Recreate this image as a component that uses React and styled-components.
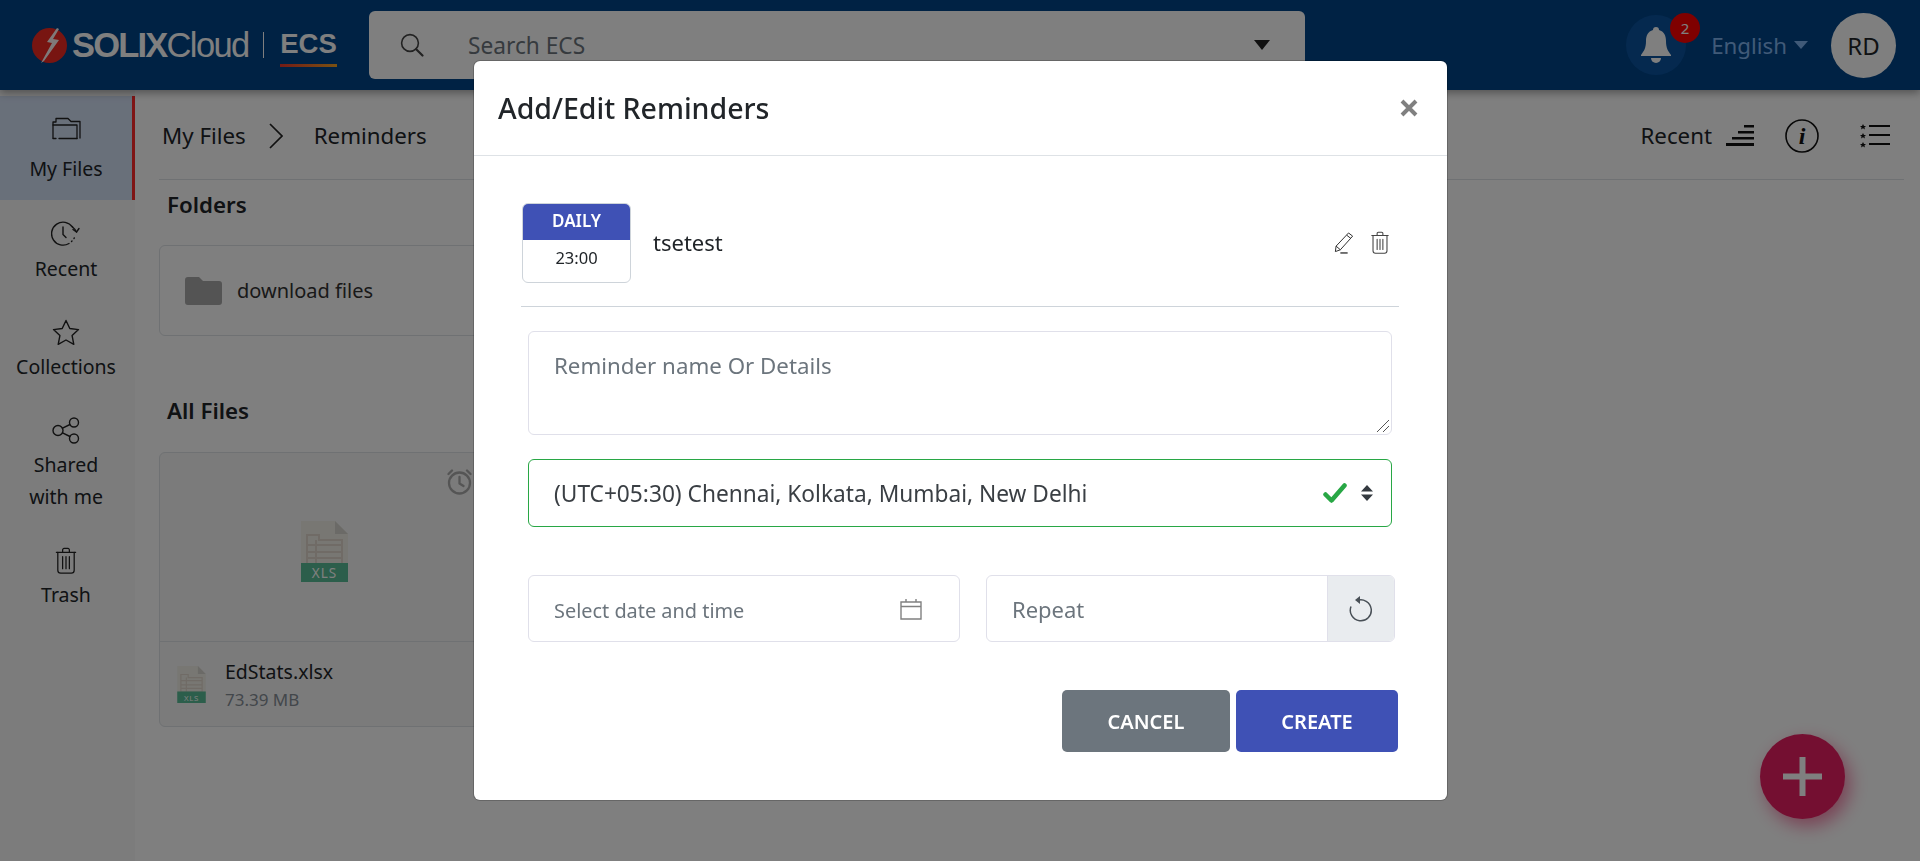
import React from "react";
import styled, { createGlobalStyle } from "styled-components";

const FONT = `"Noto Sans", "Open Sans", sans-serif`;

const Global = createGlobalStyle`
  html, body { margin: 0; padding: 0; height: 100%; overflow: hidden; background: #fff; }
  body { font-family: ${FONT}; color: #212529; }
  * { box-sizing: border-box; }
`;

const Page = styled.div`
  width: 1920px;
  height: 861px;
  display: flex;
  flex-direction: column;
  background: #fff;
  overflow: hidden;
`;

const Header = styled.header`
  height: 90px;
  flex: none;
  display: flex;
  align-items: center;
  background: #004488;
  box-shadow: 0 3px 8px rgba(0, 0, 0, 0.35);
  position: relative;
  z-index: 2;
`;

const Logo = styled.div`
  width: 369px;
  flex: none;
  display: flex;
  align-items: center;
  padding-left: 32px;
  color: #fff;
  font-family: "Liberation Sans", sans-serif;
  font-size: 34.5px;
`;

const LogoSolix = styled.span`
  font-weight: 700;
  letter-spacing: -1.8px;
  margin-left: 5px;
`;

const LogoCloud = styled.span`
  letter-spacing: -1.6px;
`;

const LogoBar = styled.span`
  width: 1.5px;
  height: 26px;
  background: #fff;
  margin: 0 16px 0 14px;
`;

const LogoEcs = styled.span`
  font-size: 27.5px;
  font-weight: 700;
  line-height: 34px;
  padding-bottom: 3px;
  border-bottom: 3.5px solid;
  border-image: linear-gradient(90deg, #e8352c, #f5a623) 1;
  position: relative;
  top: 2px;
`;

const SearchBox = styled.div`
  width: 936px;
  height: 68px;
  flex: none;
  display: flex;
  align-items: center;
  background: #fff;
  border-radius: 6px;
  padding: 0 35px 0 31px;
  font-size: 22.7px;
  color: #6c757d;
`;

const SearchText = styled.span`
  margin-left: 44px;
  flex: 1;
`;

const HeaderRight = styled.div`
  margin-left: auto;
  display: flex;
  align-items: center;
  padding-right: 24px;
`;

const BellWrap = styled.div`
  width: 60px;
  height: 60px;
  border-radius: 50%;
  background: #0a539f;
  display: flex;
  align-items: center;
  justify-content: center;
  position: relative;
  margin-right: 25px;
`;

const Badge = styled.span`
  position: absolute;
  top: -2px;
  right: -14px;
  width: 30px;
  height: 30px;
  border-radius: 50%;
  background: #ff0000;
  color: #fff;
  font-size: 15px;
  display: flex;
  align-items: center;
  justify-content: center;
`;

const Lang = styled.div`
  display: flex;
  align-items: center;
  gap: 7px;
  font-size: 22.3px;
  color: #80b4f0;
  margin-right: 23px;
`;

const Avatar = styled.div`
  width: 65px;
  height: 65px;
  border-radius: 50%;
  background: #fff;
  color: #212529;
  font-size: 24px;
  display: flex;
  align-items: center;
  justify-content: center;
`;

const Main = styled.div`
  flex: 1;
  display: flex;
  min-height: 0;
`;

const Sidebar = styled.nav`
  width: 135px;
  flex: none;
  padding-top: 6px;
  background: #f8f8f8;
`;

const NavItem = styled.div`
  display: flex;
  flex-direction: column;
  align-items: center;
  padding: ${(p) => (p.$active ? "21px 0 15px" : "21px 3px 13px 0")};
  background: ${(p) => (p.$active ? "#d3e0f5" : "transparent")};
  border-right: ${(p) => (p.$active ? "3px solid #ff2a2a" : "none")};
  font-size: 19.5px;
  line-height: 32px;
  text-align: center;
  svg { margin-bottom: ${(p) => (p.$active ? "9px" : "5px")}; display: block; }
`;

const Content = styled.main`
  flex: 1;
  padding: 0 16px 0 24px;
  min-width: 0;
`;

const TopBar = styled.div`
  height: 90px;
  display: flex;
  align-items: center;
  padding: 2px 14px 0 3px;
  border-bottom: 1px solid #dee2e6;
  font-size: 22.3px;
`;

const Crumb = styled.span`
  margin: ${(p) => p.$margin};
`;

const TopActions = styled.div`
  margin-left: auto;
  display: flex;
  align-items: center;
`;

const SortIcon = styled.svg`
  margin: 0 31px 0 14px;
`;

const InfoIcon = styled.svg`
  margin-right: 41px;
`;

const SectionTitle = styled.h5`
  margin: ${(p) => p.$top} 0 0 8px;
  font-size: 22.3px;
  font-weight: 600;
  line-height: 34px;
  color: #212529;
`;

const FolderCard = styled.div`
  width: 331px;
  height: 91px;
  margin-top: 23px;
  display: flex;
  align-items: center;
  padding-left: 25px;
  gap: 15px;
  border: 1px solid #dee2e6;
  border-radius: 6px;
  font-size: 20px;
  color: #333;
`;

const FileCard = styled.div`
  width: 331px;
  height: 275px;
  margin-top: 24px;
  border: 1px solid #dee2e6;
  border-radius: 6px;
  background: #f6f6f6;
  position: relative;
  overflow: hidden;
`;

const AlarmIcon = styled.div`
  position: absolute;
  top: 16px;
  right: 17px;
  line-height: 0;
`;

const FileThumb = styled.div`
  height: 189px;
  display: flex;
  align-items: center;
  justify-content: center;
  padding-top: 8px;
  border-bottom: 1px solid #dee2e6;
`;

const FileFoot = styled.div`
  height: 84px;
  display: flex;
  align-items: center;
  padding-left: 17px;
  gap: 19px;
`;

const FileInfo = styled.div`
  margin-top: 4px;
`;

const FileName = styled.div`
  font-size: 19.5px;
  line-height: 28px;
`;

const FileSize = styled.div`
  font-size: 17px;
  line-height: 28px;
  color: #868e96;
`;

const Fab = styled.div`
  position: absolute;
  left: 1760px;
  top: 734px;
  width: 85px;
  height: 85px;
  border-radius: 50%;
  background: #e91e63;
  box-shadow: 5px 7px 18px rgba(233, 30, 99, 0.55);
  display: flex;
  align-items: center;
  justify-content: center;
`;

const Overlay = styled.div`
  position: fixed;
  inset: 0;
  background: rgba(0, 0, 0, 0.5);
  z-index: 10;
  display: flex;
  justify-content: center;
  align-items: flex-start;
  padding: 61px 0 0 1px;
`;

const Modal = styled.div`
  width: 973px;
  height: 739px;
  background: #fff;
  border-radius: 6px;
  box-shadow: 0 0 0 1px rgba(0, 0, 0, 0.2);
  display: flex;
  flex-direction: column;
`;

const ModalHeader = styled.div`
  height: 95px;
  flex: none;
  display: flex;
  align-items: center;
  justify-content: space-between;
  padding: 0 29px 0 24px;
  border-bottom: 1px solid #dee2e6;
`;

const ModalTitle = styled.h4`
  margin: 0;
  font-size: 28.5px;
  font-weight: 500;
  color: #212529;
`;

const ModalBody = styled.div`
  padding: 47px 48px 0 47px;
`;

const ReminderRow = styled.div`
  display: flex;
  align-items: center;
  padding: 0 9px 23px 1px;
  border-bottom: 1px solid #ced4da;
`;

const DateCard = styled.div`
  width: 109px;
  height: 80px;
  flex: none;
  border: 1px solid #ced4da;
  border-radius: 6px;
  overflow: hidden;
  text-align: center;
  margin-right: 22px;
`;

const DateHead = styled.div`
  height: 36px;
  background: #3f51b5;
  color: #fff;
  font-size: 17px;
  font-weight: 600;
  line-height: 34px;
`;

const DateTime = styled.div`
  font-size: 16.5px;
  line-height: 36px;
  color: #212529;
`;

const ReminderName = styled.div`
  flex: 1;
  margin-bottom: 2px;
  font-size: 22px;
`;

const RowIcons = styled.div`
  display: flex;
  align-items: center;
  gap: 16px;
  margin-bottom: 2px;
`;

const Field = styled.div`
  margin: ${(p) => p.$top} 7px 0;
`;

const TextBox = styled.div`
  height: 104px;
  padding: 18px 25px;
  border: 1px solid #e0e0ea;
  border-radius: 6px;
  font-size: 22.3px;
  color: #6c757d;
  position: relative;
`;

const Grip = styled.svg`
  position: absolute;
  right: 2px;
  bottom: 2px;
`;

const SelectBox = styled.div`
  height: 68px;
  display: flex;
  align-items: center;
  padding: 0 18px 0 25px;
  border: 1.5px solid #28a745;
  border-radius: 6px;
  font-size: 22.7px;
  color: #3a3f44;
`;

const SelectText = styled.span`
  flex: 1;
`;

const CheckIcon = styled.svg`
  margin-right: 14px;
`;

const DateRow = styled.div`
  display: grid;
  grid-template-columns: 432px 409px;
  column-gap: 26px;
  margin: 48px 0 0 7px;
`;

const InputBox = styled.div`
  height: 67px;
  display: flex;
  align-items: center;
  padding-left: 25px;
  border: 1px solid #e0e0ea;
  border-radius: 6px;
  font-size: ${(p) => p.$size};
  color: #6c757d;
  overflow: hidden;
`;

const InputText = styled.span`
  flex: 1;
  padding-top: ${(p) => p.$pad || "0"};
`;

const CalIcon = styled.span`
  line-height: 0;
  margin-right: 37px;
`;

const Addon = styled.span`
  width: 67px;
  align-self: stretch;
  background: #e9ecef;
  border-left: 1px solid #e0e0ea;
  display: flex;
  align-items: center;
  justify-content: center;
`;

const Actions = styled.div`
  display: flex;
  justify-content: flex-end;
  gap: 6px;
  margin: 48px 1px 0 0;
`;

const Btn = styled.button`
  width: ${(p) => p.$w};
  height: 62px;
  border: none;
  border-radius: 5px;
  background: ${(p) => p.$bg};
  color: #fff;
  font-family: ${FONT};
  font-size: 20px;
  font-weight: 600;
`;

const Stroke = ({ w = 30, h = 30, vb = "0 0 30 30", sw = 1.4, color = "#222", children }) => (
  <svg width={w} height={h} viewBox={vb} fill="none" stroke={color} strokeWidth={sw} strokeLinecap="round" strokeLinejoin="round">
    {children}
  </svg>
);

const TrashIcon = ({ w, h, color }) => (
  <Stroke w={w} h={h} vb="0 0 24 28" color={color} sw={1.3}>
    <path d="M2 5.5h20M8.5 5.5V3a1.5 1.5 0 0 1 1.5-1.5h4A1.5 1.5 0 0 1 15.5 3v2.5" />
    <path d="M3.5 5.5V24a3 3 0 0 0 3 3h11a3 3 0 0 0 3-3V5.5" />
    <path d="M8.5 10v12.5M12 10v12.5M15.5 10v12.5" />
  </Stroke>
);

const XlsIcon = ({ w, h, fs }) => (
  <svg width={w} height={h} viewBox="0 0 47 61">
    <path d="M0 0h34l13 13v35H0z" fill="#f0efe6" />
    <path d="M34 0l13 13H34z" fill="#d6d5cf" />
    <path d="M6 14h12v5h23v24H6z" fill="none" stroke="#e0d6cc" strokeWidth="2" />
    <path d="M6 24h35M6 31h35M6 37h35M15 19v24" stroke="#e0d6cc" strokeWidth="2" />
    <rect y="42" width="47" height="19" fill="#58bd96" />
    <text x="23.5" y="57" textAnchor="middle" fontSize={fs} fontFamily='"Noto Sans", sans-serif' fill="#fff" letterSpacing="1">XLS</text>
  </svg>
);

export default function App() {
  return (
    <>
      <Global />
      <Page>
        <Header>
          <Logo>
            <svg width="35" height="35" viewBox="0 0 35 35">
              <circle cx="17.5" cy="17.5" r="17.5" fill="#f02a22" />
              <path d="M25 0 L15 14 L20 15 L9 35 L12 33 L27 12 L21 11 L27 1z" fill="#fff" opacity="0.95" />
            </svg>
            <LogoSolix>SOLIX</LogoSolix>
            <LogoCloud>Cloud</LogoCloud>
            <LogoBar />
            <LogoEcs>ECS</LogoEcs>
          </Logo>
          <SearchBox>
            <Stroke w="24" h="24" vb="0 0 24 24" sw="1.6" color="#444">
              <circle cx="10" cy="10" r="8.4" />
              <path d="M16.2 16.2L22.5 22.5" strokeWidth="2.2" />
            </Stroke>
            <SearchText>Search ECS</SearchText>
            <svg width="16" height="10" viewBox="0 0 16 10">
              <path d="M0 0h16L8 10z" fill="#222" />
            </svg>
          </SearchBox>
          <HeaderRight>
            <BellWrap>
              <svg width="30" height="36" viewBox="0 0 30 36">
                <path d="M15 0a3 3 0 0 1 3 3c5 1.5 7 5.5 7 11 0 7 2 10 5 14v1H0v-1c3-4 5-7 5-14 0-5.500 2-9.500 7-11a3 3 0 0 1 3-3z" fill="#fff" />
                <path d="M10 31h10a5 5 0 0 1-10 0z" fill="#fff" />
              </svg>
              <Badge>2</Badge>
            </BellWrap>
            <Lang>
              English
              <svg width="14" height="8" viewBox="0 0 14 8">
                <path d="M0 0h14L7 8z" fill="#80b4f0" />
              </svg>
            </Lang>
            <Avatar>RD</Avatar>
          </HeaderRight>
        </Header>
        <Main>
          <Sidebar>
            <NavItem $active>
              <Stroke w="29" h="27" vb="0 0 29 27" sw="1.3">
                <path d="M1 21V5h3V1.500h12l3 3h9V21" />
                <path d="M1 8h24v13.500" />
                <path d="M1 21.500h3M7 21.500h18" />
              </Stroke>
              My Files
            </NavItem>
            <NavItem>
              <Stroke w="30" h="27" vb="0 0 30 27" sw="1.4">
                <path d="M21.500 6A11.500 11.500 0 1 0 18 22.500" />
                <path d="M21.500 6Q24 8 25.500 11" />
                <path d="M28 7.500l-2.500 3.500-3.500-2.500" />
                <path d="M12 6v7.500l3 3" />
                <path d="M20.500 20.500l.5-.5M23 17.500l.3-.6" />
              </Stroke>
              Recent
            </NavItem>
            <NavItem>
              <Stroke w="30" h="27" vb="0 0 30 27" sw="1.4">
                <path d="M15 1.500l3.800 8 8.700 1.100-6.400 6 1.700 8.700-7.800-4.300-7.800 4.300 1.700-8.700-6.400-6 8.700-1.100z" />
              </Stroke>
              Collections
            </NavItem>
            <NavItem>
              <Stroke w="30" h="27" vb="0 0 30 27" sw="1.4">
                <circle cx="7" cy="13.500" r="5" />
                <circle cx="23" cy="5.500" r="4.500" />
                <circle cx="23" cy="21.500" r="4.500" />
                <path d="M11.500 11.200l7.500-3.700M11.500 15.800l7.500 3.700" />
              </Stroke>
              Shared<br />with me
            </NavItem>
            <NavItem>
              <TrashIcon w="24" h="27" />
              Trash
            </NavItem>
          </Sidebar>
          <Content>
            <TopBar>
              <Crumb $margin="0 23px 0 0">My Files</Crumb>
              <svg width="14" height="26" viewBox="0 0 14 26" fill="none" stroke="#222" strokeWidth="1.7">
                <path d="M1 1l12 12L1 25" />
              </svg>
              <Crumb $margin="0 0 0 31px">Reminders</Crumb>
              <TopActions>
                <span>Recent</span>
                <SortIcon width="28" height="21" viewBox="0 0 28 21" fill="#111">
                  <rect x="18" y="0" width="10" height="2.500" />
                  <rect x="12" y="6" width="16" height="2.500" />
                  <rect x="6" y="12" width="22" height="2.500" />
                  <rect x="0" y="18" width="28" height="3" />
                </SortIcon>
                <InfoIcon width="34" height="34" viewBox="0 0 34 34">
                  <circle cx="17" cy="17" r="16" fill="none" stroke="#111" strokeWidth="1.600" />
                  <text x="17" y="25" textAnchor="middle" fontFamily='"Liberation Serif", serif' fontStyle="italic" fontWeight="700" fontSize="24" fill="#111">i</text>
                </InfoIcon>
                <svg width="30" height="24" viewBox="0 0 30 24" fill="#111">
                  <path d="M3 0l1 2h2L4.400 3.400 5 5.500 3 4.300 1 5.500l.6-2.100L0 2h2zM3 9l1 2h2l-1.600 1.400.6 2.100L3 13.300l-2 1.200.6-2.100L0 11h2zM3 18l1 2h2l-1.600 1.400.6 2.100L3 22.300l-2 1.200.6-2.100L0 20h2z" />
                  <rect x="9" y="1" width="21" height="2" />
                  <rect x="9" y="10" width="21" height="2" />
                  <rect x="9" y="19" width="21" height="2" />
                </svg>
              </TopActions>
            </TopBar>
            <SectionTitle $top="8px">Folders</SectionTitle>
            <FolderCard>
              <svg width="37" height="28" viewBox="0 0 37 28">
                <path d="M3 0h11l4 4h16a3 3 0 0 1 3 3v18a3 3 0 0 1-3 3H3a3 3 0 0 1-3-3V3a3 3 0 0 1 3-3z" fill="#a8a8a8" />
              </svg>
              download files
            </FolderCard>
            <SectionTitle $top="58px">All Files</SectionTitle>
            <FileCard>
              <AlarmIcon>
                <Stroke w="25" h="26" vb="0 0 25 26" sw="2.300" color="#aaa">
                  <circle cx="12.500" cy="14" r="10.500" />
                  <path d="M12.500 8v6.500l4 2.500M1.500 5L5 1.500M23.500 5L20 1.500" />
                </Stroke>
              </AlarmIcon>
              <FileThumb>
                <XlsIcon w="47" h="61" fs="13.500" />
              </FileThumb>
              <FileFoot>
                <XlsIcon w="29" h="37" fs="13" />
                <FileInfo>
                  <FileName>EdStats.xlsx</FileName>
                  <FileSize>73.39 MB</FileSize>
                </FileInfo>
              </FileFoot>
            </FileCard>
          </Content>
        </Main>
        <Fab>
          <svg width="39" height="39" viewBox="0 0 39 39" fill="#fff">
            <rect x="16.500" width="6" height="39" />
            <rect y="16.500" width="39" height="6" />
          </svg>
        </Fab>
      </Page>
      <Overlay>
        <Modal>
          <ModalHeader>
            <ModalTitle>Add/Edit Reminders</ModalTitle>
            <svg width="18" height="18" viewBox="0 0 18 18" stroke="#808080" strokeWidth="4">
              <path d="M2 2l14 14M16 2L2 16" />
            </svg>
          </ModalHeader>
          <ModalBody>
            <ReminderRow>
              <DateCard>
                <DateHead>DAILY</DateHead>
                <DateTime>23:00</DateTime>
              </DateCard>
              <ReminderName>tsetest</ReminderName>
              <RowIcons>
                <svg width="20" height="23" viewBox="0 0 22 24" fill="none" stroke="#333" strokeWidth="1.100">
                  <path d="M16 1.500l4.500 3.500L7 20l-5.500 2 .8-6z" />
                  <path d="M14 4l4.500 3.500M2.300 16L7 20" />
                  <path d="M7 23.500h8" strokeWidth="1.500" />
                </svg>
                <TrashIcon w="20" h="23" color="#444" />
              </RowIcons>
            </ReminderRow>
            <Field $top="24px">
              <TextBox>
                Reminder name Or Details
                <Grip width="13" height="13" viewBox="0 0 13 13" stroke="#555" strokeWidth="1">
                  <path d="M1 13L13 1M7 13l6-6" />
                </Grip>
              </TextBox>
            </Field>
            <Field $top="24px">
              <SelectBox>
                <SelectText>(UTC+05:30) Chennai, Kolkata, Mumbai, New Delhi</SelectText>
                <CheckIcon width="24" height="20" viewBox="0 0 24 20" fill="none" stroke="#28a745" strokeWidth="4.500" strokeLinecap="round" strokeLinejoin="round">
                  <path d="M2.500 11.500l6 6L21.500 2.500" />
                </CheckIcon>
                <svg width="12" height="16" viewBox="0 0 12 16" fill="#343a40">
                  <path d="M6 0l6 6.500H0zM0 9.500h12L6 16z" />
                </svg>
              </SelectBox>
            </Field>
            <DateRow>
              <InputBox $size="19.900px">
                <InputText $pad="3px">Select date and time</InputText>
                <CalIcon>
                  <svg width="22" height="22" viewBox="0 0 22 22" fill="none" stroke="#808080" strokeWidth="1.400">
                    <path d="M1 4h20v17H1zM1 8.500h20M6 1v3M16 1v3" />
                  </svg>
                </CalIcon>
              </InputBox>
              <InputBox $size="22px">
                <InputText>Repeat</InputText>
                <Addon>
                  <svg width="24" height="27" viewBox="0 0 24 27" fill="none" stroke="#495057" strokeWidth="1.500">
                    <path d="M8 5.500a10.500 10.500 0 1 1-6 6" />
                    <path d="M11 1v8L6 5z" fill="#495057" stroke="none" />
                  </svg>
                </Addon>
              </InputBox>
            </DateRow>
            <Actions>
              <Btn $w="168px" $bg="#6c757d">CANCEL</Btn>
              <Btn $w="162px" $bg="#3f51b5">CREATE</Btn>
            </Actions>
          </ModalBody>
        </Modal>
      </Overlay>
    </>
  );
}
